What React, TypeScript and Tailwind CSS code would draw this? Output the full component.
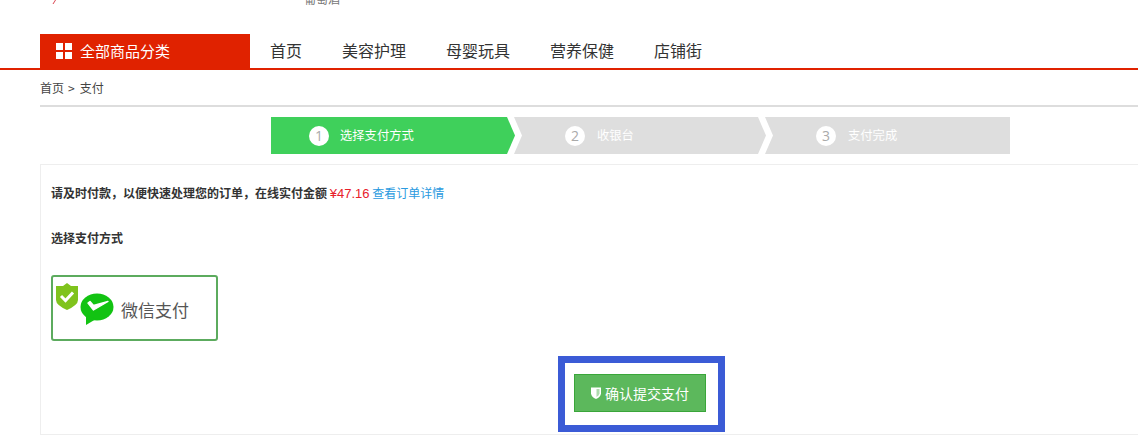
function Step({ n, label, active, cls, gap }: { n: number; label: string; active?: boolean; cls: string; gap: string }) {
  return (
    <div className={`h-[37px] flex items-center text-[12.3px] text-white ${active ? "bg-[#3fd05b]" : "bg-[#dedede]"} ${cls}`}>
      <span className={`w-[20px] h-[20px] rounded-full bg-white flex items-center justify-center text-[#aaa] text-[14px] font-['Open_Sans',sans-serif] shrink-0 ${gap}`}>{n}</span>
      <span>{label}</span>
    </div>
  );
}

export default function App() {
  return (
    <div className="w-[1138px] h-[446px] bg-white overflow-hidden relative font-['Noto_Sans_CJK_SC','Liberation_Sans',sans-serif] text-[#333]">
      <div className="h-[34px] pl-[52px] flex items-start overflow-hidden">
        <svg width="4" height="4" viewBox="0 0 4 4" className="shrink-0">
          <path d="M0.5 4 L3 0 L4 0 L1.5 4Z" fill="#d9434f" />
        </svg>
        <div className="ml-[248px] -mt-[9px] text-[12px] leading-[16px] text-[#777]">葡萄酒</div>
      </div>

      <div className="h-[36px] border-b-2 border-[#e02200] pl-[40px] flex items-start">
        <div className="w-[210px] h-[34px] bg-[#e02200] flex items-center pl-[16px] text-white text-[15px]">
          <div className="grid grid-cols-2 gap-[2px] mr-[8px]">
            <span className="w-[7px] h-[7px] bg-white" />
            <span className="w-[7px] h-[7px] bg-white" />
            <span className="w-[7px] h-[7px] bg-white" />
            <span className="w-[7px] h-[7px] bg-white" />
          </div>
          全部商品分类
        </div>
        <nav className="flex gap-[40px] pl-[20px] text-[16px] leading-[32px] text-[#333]">
          <span>首页</span>
          <span>美容护理</span>
          <span>母婴玩具</span>
          <span>营养保健</span>
          <span>店铺街</span>
        </nav>
      </div>

      <div className="ml-[40px] h-[37px] border-b-2 border-[#ddd] text-[12px] leading-[35px] text-[#444] flex">
        <span>首页</span>
        <span className="ml-[4px] mr-[5px]">&gt;</span>
        <span>支付</span>
      </div>

      <div className="flex pl-[271px] mt-[10px]">
        <Step n={1} label="选择支付方式" active gap="mr-[11px]" cls="w-[244px] pl-[38px] [clip-path:polygon(0_0,236px_0,244px_50%,236px_100%,0_100%)]" />
        <Step n={2} label="收银台" gap="mr-[12px]" cls="w-[252px] -ml-[1px] pl-[51px] [clip-path:polygon(0_0,244px_0,252px_50%,244px_100%,0_100%,8px_50%)]" />
        <Step n={3} label="支付完成" gap="mr-[12px]" cls="w-[245px] -ml-[1px] pl-[51px] [clip-path:polygon(0_0,100%_0,100%_100%,0_100%,8px_50%)]" />
      </div>

      <div className="ml-[40px] mt-[10px] h-[271px] border border-[#eee] border-r-0 pl-[10px] pt-[19px]">
        <div className="text-[12px] leading-[18px] font-bold text-[#333]">
          请及时付款，以便快速处理您的订单，在线实付金额{" "}
          <span className="font-normal text-[#e8202a] font-['Liberation_Sans','Noto_Sans_CJK_SC',sans-serif] text-[13px]">¥47.16</span>{" "}
          <span className="font-normal text-[#2a9ae0]">查看订单详情</span>
        </div>
        <div className="text-[12px] leading-[18px] font-bold text-[#333] mt-[26px]">选择支付方式</div>
        <div className="mt-[28px] w-[167px] h-[66px] border-2 border-[#5cab5e] rounded-[3px] relative flex items-center pl-[68px] text-[17px] text-[#555]">
          <svg className="absolute left-[2px] top-[6px]" width="24" height="28" viewBox="0 0 24 28">
            <path d="M12 0 L16 3 L23 3 L23 17 Q23 22 12 27 Q1 22 1 17 L1 3 L8 3Z" fill="#7fc31c" />
            <path d="M6 13 L10.5 17.5 L18 9.5" fill="none" stroke="#fff" strokeWidth="3" />
          </svg>
          <svg className="absolute left-[27px] top-[16px]" width="34" height="33" viewBox="0 0 34 33">
            <ellipse cx="17" cy="14" rx="16.5" ry="13.5" fill="#12c312" />
            <path d="M6 22 L6 32 L16 26Z" fill="#12c312" />
            <path d="M8 10 L13.5 17 L28 8.5 L13.5 12.5 L10 8.5Z" fill="#fff" stroke="#fff" strokeWidth="1.4" strokeLinejoin="round" />
          </svg>
          <span className="mt-[3px]">微信支付</span>
        </div>
      </div>

      <div className="absolute left-[574px] top-[374px] w-[132px] h-[38px] bg-[#5cb85c] border border-[#3aa63a] flex items-center justify-center text-white text-[14px]">
        <svg width="10" height="12" viewBox="0 0 10 12" className="mr-[4px]">
          <path d="M0 0.5 L10 0.5 L10 6.5 Q9.5 10 5 12 Q0.5 10 0 6.5Z" fill="#fff" />
          <path d="M5.5 2 L8.5 2 L8.5 6.5 Q8 8.5 5.5 10Z" fill="#5cb85c" opacity="0.5" />
        </svg>
        确认提交支付
      </div>
      <div className="absolute left-[558px] top-[356px] w-[167px] h-[76px] border-[7px] border-[#3b5bd6] pointer-events-none" />
    </div>
  );
}
